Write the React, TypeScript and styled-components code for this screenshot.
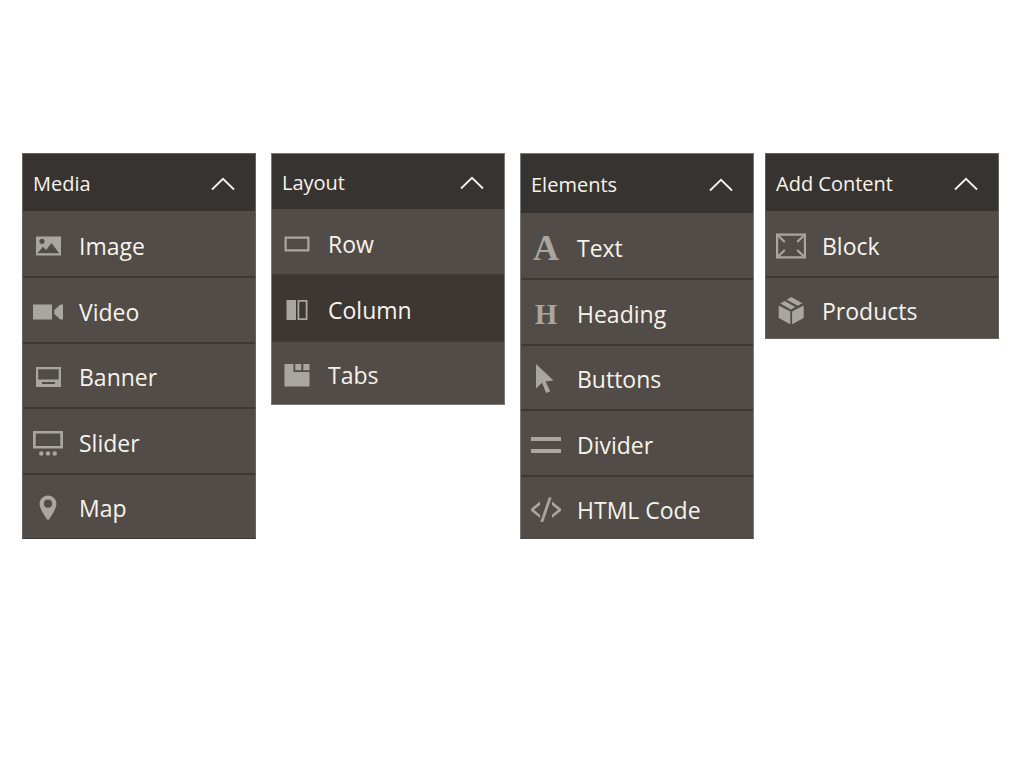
import React from "react";
import styled, { createGlobalStyle } from "styled-components";

const Page = createGlobalStyle`
  *, *::before, *::after { box-sizing: border-box; }
  body {
    margin: 0;
    background: #ffffff;
    font-family: "Open Sans", "Noto Sans", sans-serif;
    color: #f7f3eb;
  }
`;

const Board = styled.main`
  display: flex;
  align-items: flex-start;
  padding: 153px 25px 48px 22px;
`;

const Panel = styled.section<{ $gap: number; $edge: string; $base: string }>`
  flex: 1 1 0;
  min-width: 0;
  margin-left: ${(p) => p.$gap}px;
  background: #514c47;
  border: 1px solid ${(p) => p.$edge};
  border-bottom-color: ${(p) => p.$base};
`;

const PanelHeading = styled.h2`
  margin: 0;
  font-weight: 400;
`;

const Toggle = styled.button<{ $height: number }>`
  display: flex;
  align-items: center;
  justify-content: space-between;
  width: 100%;
  height: ${(p) => p.$height}px;
  padding: 2px 20px 0 10px;
  border: 0;
  background: #373330;
  color: inherit;
  font: inherit;
  font-size: 20px;
  line-height: 28px;
  text-align: left;
  white-space: nowrap;
  cursor: pointer;
`;

const List = styled.ul`
  margin: 0;
  padding: 2px 0 0;
  list-style: none;
`;

const Row = styled.li`
  height: 65px;
  border-bottom: 2px solid #3d3834;
  &:nth-child(even) { height: 66px; }
`;

const LastRow = styled.li<{ $height: number }>`
  height: ${(p) => p.$height}px;
  overflow: hidden;
`;

const Item = styled.button<{ $active?: boolean }>`
  display: flex;
  align-items: center;
  gap: 16px;
  width: 100%;
  height: 100%;
  min-height: 63px;
  padding: 3px 10px 0;
  border: 0;
  background: ${(p) => (p.$active ? "#3c3733" : "transparent")};
  color: inherit;
  font: inherit;
  font-size: 23px;
  line-height: 32px;
  text-align: left;
  white-space: nowrap;
  cursor: grab;
`;

const Icon = styled.svg`
  flex: none;
  width: 30px;
  height: 30px;
  fill: #a9a69f;
`;

const Letter = styled.span<{ $size: number }>`
  flex: none;
  width: 30px;
  color: #a9a69f;
  font-family: "Liberation Serif", serif;
  font-weight: 700;
  font-size: ${(p) => p.$size}px;
  line-height: 32px;
  text-align: center;
`;

const Chevron = () => (
  <svg width="24" height="14" viewBox="0 0 24 14" fill="none" stroke="#f7f3eb" strokeWidth="1.8" aria-hidden="true">
    <path d="M1 12.5 12 1.8 23 12.5" />
  </svg>
);

const icons: Record<string, React.ReactNode> = {
  Image: (
    <Icon viewBox="0 0 30 30" aria-hidden="true">
      <path fillRule="evenodd" d="M3 5.5h25v19H3zM9 7.7a2.6 2.6 0 1 0 0 5.2 2.6 2.6 0 0 0 0-5.2zM4.5 22.3h21.7L18.5 12l-5.4 7-3.2-3.2z" />
    </Icon>
  ),
  Video: (
    <Icon viewBox="0 0 30 30" aria-hidden="true">
      <path d="M0 7.5h19v15H0zM30 7.5v15h-2.5L21.2 17v-4l6.3-5.5z" />
    </Icon>
  ),
  Banner: (
    <Icon viewBox="0 0 30 30" aria-hidden="true">
      <path fillRule="evenodd" d="M3 5h25v20H3zM5.2 7.2v10.3h20.5V7.2zM9 20v2h13v-2z" />
    </Icon>
  ),
  Slider: (
    <Icon viewBox="0 0 30 30" aria-hidden="true">
      <path fillRule="evenodd" d="M0 3h30v17.5H0zM2.7 5.5V18h24.6V5.5z" />
      <circle cx="8.3" cy="25.5" r="2.2" />
      <circle cx="15" cy="25.5" r="2.2" />
      <circle cx="21.7" cy="25.5" r="2.2" />
    </Icon>
  ),
  Map: (
    <Icon viewBox="0 0 30 30" aria-hidden="true">
      <path fillRule="evenodd" d="M15 2.5c-4.7 0-8.4 3.7-8.4 8.3 0 3 1.6 6.2 3.600 9.600l3.600 5.800c.6.800 1.800.8 2.400 0l3.600-5.800c2-3.400 3.600-6.600 3.600-9.600 0-4.600-3.700-8.300-8.400-8.300zM15 6.600a4.100 4.100 0 1 1 0 8.200 4.100 4.100 0 0 1 0-8.200z" />
    </Icon>
  ),
  Row: (
    <Icon viewBox="0 0 30 30" aria-hidden="true">
      <path fillRule="evenodd" d="M2.500 7.500H27.500v15H2.500zM4.700 9.700v10.600h20.600V9.700z" />
    </Icon>
  ),
  Column: (
    <Icon viewBox="0 0 30 30" aria-hidden="true">
      <path fillRule="evenodd" d="M4.500 5H14v20H4.500zM15.500 5h10v20h-10zM17.300 6.800v16.400h6.400V6.800z" />
    </Icon>
  ),
  Tabs: (
    <Icon viewBox="0 0 30 30" aria-hidden="true">
      <path d="M2.500 4H11.500v8h16V26.500h-25zM13.300 4h6v6.300h-6zM21.300 4h6.200v6.300h-6.200z" />
    </Icon>
  ),
  Text: <Letter $size={36} aria-hidden="true">A</Letter>,
  Heading: <Letter $size={29} aria-hidden="true">H</Letter>,
  Buttons: (
    <Icon viewBox="0 0 30 30" aria-hidden="true">
      <path d="M5 0 22.500 16.500 14.600 17.400 19.200 27.300 15.200 29 11 18.800 5 24.500z" />
    </Icon>
  ),
  Divider: (
    <Icon viewBox="0 0 30 30" aria-hidden="true">
      <path d="M0 7h30v4H0zM0 19h30v4H0z" />
    </Icon>
  ),
  "HTML Code": (
    <Icon viewBox="0 0 30 30" aria-hidden="true">
      <path d="M9 6.500v3.400L3 14.800 9 19.700v3.400L0 15.800v-2zM21 6.500v3.400l6 4.900-6 4.900v3.400l9-7.300v-2zM17.700 2.500h2.900L12.200 27H9.300z" />
    </Icon>
  ),
  Block: (
    <Icon viewBox="0 0 30 30" aria-hidden="true">
      <path fillRule="evenodd" d="M0 2.500h30v25H0zM2.200 4.700v20.600h25.600V4.700z" />
      <path d="M2.500 5l6.300 6M27.500 5l-6.300 6M2.500 25l6.300-6M27.500 25l-6.300-6" stroke="#a9a69f" strokeWidth="2.200" fill="none" />
    </Icon>
  ),
  Products: (
    <Icon viewBox="0 0 30 30" aria-hidden="true">
      <path d="M2.700 9.500 14.300 15.500v12.800L2.700 22zM27.700 9.500 16.100 15.500v12.800L27.700 22zM4.300 7.500 8.700 5 19.300 11 14.900 13.600zM10.700 3.700 15.300 1 26.300 7.200 21.700 9.800z" />
    </Icon>
  ),
};

interface Group {
  title: string;
  gap: number;
  head: number;
  tail: number;
  edge: string;
  base: string;
  items: string[];
  active?: string;
}

const groups: Group[] = [
  { title: "Media", gap: 0, head: 57, tail: 63, edge: "#66625e", base: "#3d3834", items: ["Image", "Video", "Banner", "Slider", "Map"] },
  { title: "Layout", gap: 15, head: 55, tail: 62, edge: "#7b7976", base: "#7b7976", items: ["Row", "Column", "Tabs"], active: "Column" },
  { title: "Elements", gap: 15, head: 59, tail: 61, edge: "#7b7976", base: "#514c47", items: ["Text", "Heading", "Buttons", "Divider", "HTML Code"] },
  { title: "Add Content", gap: 11, head: 57, tail: 60, edge: "#66625e", base: "#66625e", items: ["Block", "Products"] },
];

export default function App() {
  return (
    <>
      <Page />
      <Board>
        {groups.map((g) => (
          <Panel key={g.title} $gap={g.gap} $edge={g.edge} $base={g.base} aria-label={g.title}>
            <PanelHeading>
              <Toggle type="button" aria-expanded="true" $height={g.head}>
                {g.title}
                <Chevron />
              </Toggle>
            </PanelHeading>
            <List>
              {g.items.map((name, i) => {
                const item = (
                  <Item type="button" $active={name === g.active}>
                    {icons[name]}
                    {name}
                  </Item>
                );
                return i === g.items.length - 1 ? (
                  <LastRow key={name} $height={g.tail}>{item}</LastRow>
                ) : (
                  <Row key={name}>{item}</Row>
                );
              })}
            </List>
          </Panel>
        ))}
      </Board>
    </>
  );
}
